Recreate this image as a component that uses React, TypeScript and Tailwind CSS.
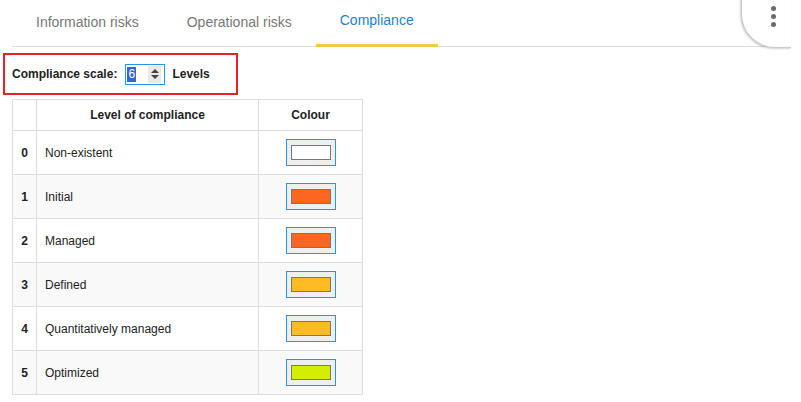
import React from "react";

type Level = { n: number; name: string; color: string };

const LEVELS: Level[] = [
  { n: 0, name: "Non-existent", color: "#ffffff" },
  { n: 1, name: "Initial", color: "#ff6622" },
  { n: 2, name: "Managed", color: "#ff6622" },
  { n: 3, name: "Defined", color: "#ffbb22" },
  { n: 4, name: "Quantitatively managed", color: "#ffbb22" },
  { n: 5, name: "Optimized", color: "#d4ee00" },
];

const TABS = ["Information risks", "Operational risks", "Compliance"];

function Swatch({ color }: { color: string }) {
  return (
    <div className="mx-auto flex h-[27px] w-[50px] items-center justify-center border border-[#2196f3] bg-[#efefef]">
      <div
        className="h-[15px] w-[40px] border border-[#777]"
        style={{ backgroundColor: color }}
      />
    </div>
  );
}

export default function App() {
  return (
    <div className="relative h-[402px] w-[801px] overflow-hidden bg-white font-['Liberation_Sans',Arial,sans-serif] text-[#222]">
      {/* Tabs */}
      <div className="ml-3 flex h-[47px] w-[778px] border-b border-[#dddddd]">
        {TABS.map((t, i) => (
          <div
            key={t}
            className={`flex h-[47px] items-center px-6 pb-[3px] text-[14px] ${
              i === 2
                ? "border-b-[3px] border-[#f5c842] pb-0 text-[#1f7fc9]"
                : "text-[#777]"
            }`}
          >
            {t}
          </div>
        ))}
      </div>

      {/* Corner menu */}
      <div className="absolute right-[10px] top-[-20px] flex h-[68px] w-[50px] items-start justify-center rounded-bl-[34px] border-b border-l border-[#c8c8c8] bg-white pt-[26px] shadow-[-1px_1px_2px_rgba(0,0,0,0.18)]">
        <div className="ml-[14px] flex flex-col gap-[3px]">
          <span className="block h-[5px] w-[5px] rounded-full bg-[#6b6b6b]" />
          <span className="block h-[5px] w-[5px] rounded-full bg-[#6b6b6b]" />
          <span className="block h-[5px] w-[5px] rounded-full bg-[#6b6b6b]" />
        </div>
      </div>

      {/* Scale */}
      <div className="ml-[3px] mt-[6px] flex h-[42px] w-[235px] items-center border-2 border-[#e8212b] pl-[7px] text-[12px] font-bold">
        <span>Compliance scale:</span>
        <div className="ml-[8px] flex h-[21px] w-[40px] items-center border border-[#2196f3] bg-white pl-[1px] pr-[3px]">
          <span className="bg-[#3367d6] px-[1px] font-normal leading-[15px] text-white">6</span>
          <div className="ml-auto flex h-[17px] w-[13px] flex-col items-center justify-center gap-[2px] bg-[#e9e9e9]">
            <span className="block h-0 w-0 border-x-[4px] border-b-[4px] border-x-transparent border-b-[#444]" />
            <span className="block h-0 w-0 border-x-[4px] border-t-[4px] border-x-transparent border-t-[#444]" />
          </div>
        </div>
        <span className="ml-[7px]">Levels</span>
      </div>

      {/* Table */}
      <table className="ml-3 mt-[4px] w-[351px] border-collapse text-[12px]">
        <thead>
          <tr className="h-[31px] bg-white">
            <th className="w-[24px] border border-[#dddddd]" />
            <th className="w-[222px] border border-[#dddddd] font-bold">Level of compliance</th>
            <th className="border border-[#dddddd] font-bold">Colour</th>
          </tr>
        </thead>
        <tbody>
          {LEVELS.map((l) => (
            <tr key={l.n} className={`h-[44px] ${l.n % 2 === 1 ? "bg-[#f9f9f9]" : "bg-white"}`}>
              <td className="border border-[#dddddd] text-center font-bold">{l.n}</td>
              <td className="border border-[#dddddd] pl-2">{l.name}</td>
              <td className="border border-[#dddddd]">
                <Swatch color={l.color} />
              </td>
            </tr>
          ))}
        </tbody>
      </table>
    </div>
  );
}
